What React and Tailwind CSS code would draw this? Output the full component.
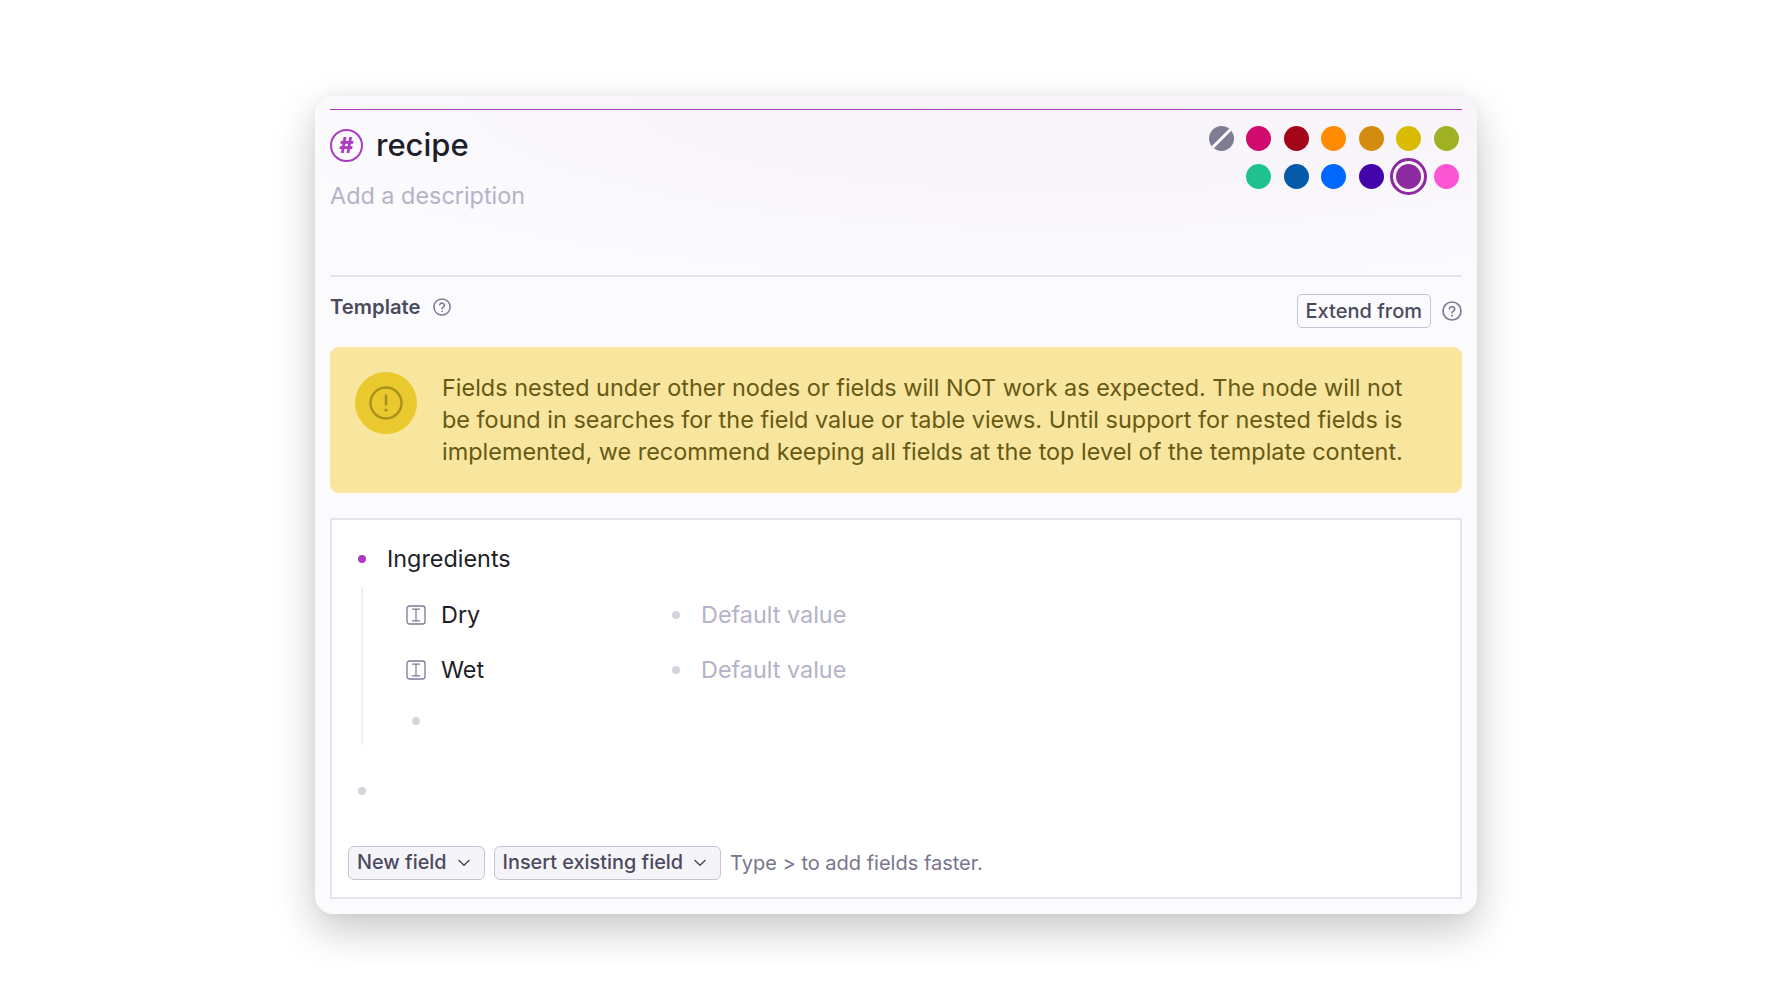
const topColors = ["#d10a6d", "#a50518", "#ff8c00", "#d48c0e", "#d9bb04", "#a0b224"];
const bottomColors = ["#1fc28f", "#0459a8", "#0068fe", "#4203aa", null, "#fb55d3"];

function Swatch({ color }) {
  return <span className="h-[25px] w-[25px] rounded-full" style={{ backgroundColor: color }} />;
}

function Help({ className }) {
  return (
    <svg viewBox="0 0 18 18" fill="none" className={className}>
      <circle cx="9" cy="9" r="8.1" stroke="#7c7a96" strokeWidth="1.5" />
      <path d="M6.6 6.9a2.45 2.45 0 0 1 4.8.6c0 1.5-2.35 1.8-2.35 3.2" stroke="#7c7a96" strokeWidth="1.5" strokeLinecap="round" />
      <circle cx="9.05" cy="13.3" r="0.9" fill="#7c7a96" />
    </svg>
  );
}

function Chevron() {
  return (
    <svg viewBox="0 0 12 8" fill="none" className="h-[8px] w-[12px]">
      <path d="M1 1.5 6 6.2l5-4.7" stroke="#4c4a5e" strokeWidth="1.5" strokeLinecap="round" strokeLinejoin="round" />
    </svg>
  );
}

function FieldIcon() {
  return (
    <svg viewBox="0 0 20 20" fill="none" className="h-[20px] w-[20px]">
      <rect x="1" y="1" width="18" height="18" rx="2.5" stroke="#7c7a96" strokeWidth="1.3" />
      <path d="M6 4.2h8M6 15.8h8M10 4.2v11.6" stroke="#7c7a96" strokeWidth="1.2" />
    </svg>
  );
}

function Field({ name }) {
  return (
    <div className="flex h-[55px] items-center">
      <span className="flex w-[36px] pl-[1px]"><FieldIcon /></span>
      <span className="w-[231px] text-[23.4px] text-[#1e1e28]">{name}</span>
      <span className="h-[8px] w-[8px] rounded-full bg-[#d5d4de]" />
      <span className="ml-[21px] text-[23.4px] text-[#b5b3c7]">Default value</span>
    </div>
  );
}

function DropButton({ children }) {
  return (
    <button className="flex h-[34px] items-center gap-[11px] rounded-[6px] border border-[#c6c4d4] bg-[#f5f5f9] pl-[8px] pr-[14px] text-[19.85px] font-medium text-[#4c4a5e]">
      {children}
      <Chevron />
    </button>
  );
}

export default function App() {
  return (
    <div className="flex min-h-screen justify-center bg-white pt-[96px] font-['Inter',sans-serif]">
      <div className="h-[818px] w-[1162px] rounded-[18px] bg-[#fbfbfd] px-[15px] pt-[13px] shadow-[0_16px_40px_rgba(0,0,0,0.22),0_0_12px_rgba(0,0,0,0.04)]">
        <div className="-mx-[15px] -mt-[13px] h-[193px] rounded-t-[18px] bg-[radial-gradient(ellipse_75%_100%_at_65%_0%,#f8f4fa_0%,#f9f6fb_50%,#fbfbfd_100%)] px-[15px] pt-[13px]">
          <div className="h-[1px] bg-[#a83bb8]" />
          <div className="flex items-start justify-between">
            <div>
              <div className="mt-[18px] flex items-center gap-[13px]">
                <span className="flex h-[33px] w-[33px] items-center justify-center rounded-full border-2 border-[#ab3cc0] text-[22px] font-extrabold leading-none text-[#ab3cc0]">#</span>
                <span className="text-[31px] font-medium leading-[34px] text-[#1e1e28]">recipe</span>
              </div>
              <div className="mt-[19px] text-[23.4px] leading-[30px] text-[#b5b3c7]">Add a description</div>
            </div>
            <div className="mr-[3.5px] mt-[16px] grid grid-cols-[repeat(7,25px)] gap-x-[12.43px] gap-y-[13px]">
              <span className="relative h-[25px] w-[25px] overflow-hidden rounded-full bg-[#7f7d93]">
                <span className="absolute left-[11px] top-[-3px] h-[31px] w-[3px] rotate-45 bg-white" />
              </span>
              {topColors.map((c) => <Swatch key={c} color={c} />)}
              <span />
              {bottomColors.map((c, i) =>
                c ? (
                  <Swatch key={c} color={c} />
                ) : (
                  <span key={i} className="h-[25px] w-[25px] rounded-full bg-[#8e2a9f] outline-[3px] outline-offset-[3px] outline-[#8e2a9f]" />
                )
              )}
            </div>
          </div>
        </div>
        <div className="mt-[-14px] h-[2px] bg-[#e5e4ea]" />
        <div className="flex h-[70px] justify-between">
          <div className="mt-[16px] flex h-[28px] items-center gap-[13px]">
            <span className="text-[20.25px] font-semibold text-[#4c4a5e]">Template</span>
            <Help className="h-[18px] w-[18px]" />
          </div>
          <div className="mt-[16px] flex h-[35px] items-center gap-[11px]">
            <button className="h-[34px] rounded-[5px] border border-[#c6c4d4] px-[8px] text-[20px] font-medium text-[#4c4a5e]">Extend from</button>
            <Help className="h-[20px] w-[20px]" />
          </div>
        </div>
        <div className="flex h-[146px] rounded-[9px] bg-[#f8e59e] pl-[25px] pt-[25px]">
          <span className="flex h-[62px] w-[62px] flex-none items-center justify-center rounded-full bg-[#e9c92d]">
            <svg viewBox="0 0 34 34" fill="none" className="h-[34px] w-[34px]">
              <circle cx="17" cy="17" r="15.5" stroke="#a8911c" strokeWidth="2.4" />
              <path d="M17 9.5v9" stroke="#a8911c" strokeWidth="2.6" strokeLinecap="round" />
              <circle cx="17" cy="24" r="1.6" fill="#a8911c" />
            </svg>
          </span>
          <p className="ml-[25px] mt-0 w-[985px] text-[23.44px] leading-[32px] text-[#665a14]">
            Fields nested under other nodes or fields will NOT work as expected. The node will not be found in searches for the field value or table views. Until support for nested fields is implemented, we recommend keeping all fields at the top level of the template content.
          </p>
        </div>
        <div className="mt-[25px] h-[381px] border-2 border-[#e5e4ea] bg-white px-[16px]">
          <div className="mt-[20px] flex h-[38px] items-center">
            <span className="ml-[10px] h-[8px] w-[8px] rounded-full bg-[#ab3cc0]" />
            <span className="ml-[21px] text-[23.4px] text-[#1e1e28]">Ingredients</span>
          </div>
          <div className="ml-[13px] mt-[9px] h-[158px] border-l-2 border-[#f0eff4] pl-[42px]">
            <Field name="Dry" />
            <Field name="Wet" />
            <div className="flex h-[47px] items-center pl-[7px]">
              <span className="h-[8px] w-[8px] rounded-full bg-[#d5d4de]" />
            </div>
          </div>
          <div className="ml-[10px] mt-[42px] h-[8px] w-[8px] rounded-full bg-[#d5d4de]" />
          <div className="mt-[51px] flex items-center gap-[9px]">
            <DropButton>New field</DropButton>
            <DropButton>Insert existing field</DropButton>
            <span className="text-[20px] text-[#77758d]">Type &gt; to add fields faster.</span>
          </div>
        </div>
      </div>
    </div>
  );
}
